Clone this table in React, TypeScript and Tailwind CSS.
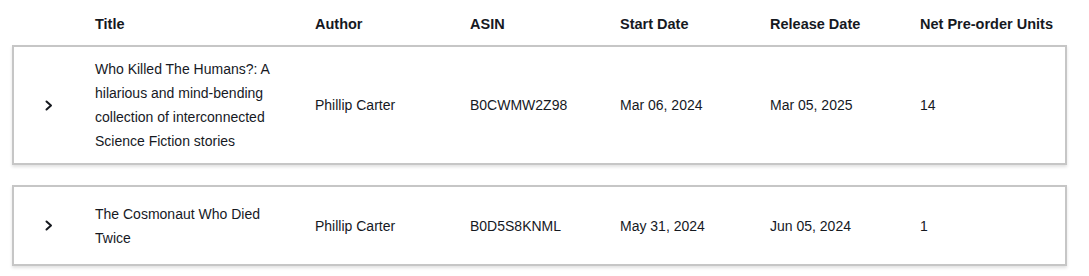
import React from "react";

interface Row {
  title: string;
  author: string;
  asin: string;
  startDate: string;
  releaseDate: string;
  units: number;
}

const rows: Row[] = [
  {
    title:
      "Who Killed The Humans?: A hilarious and mind-bending collection of interconnected Science Fiction stories",
    author: "Phillip Carter",
    asin: "B0CWMW2Z98",
    startDate: "Mar 06, 2024",
    releaseDate: "Mar 05, 2025",
    units: 14,
  },
  {
    title: "The Cosmonaut Who Died Twice",
    author: "Phillip Carter",
    asin: "B0D5S8KNML",
    startDate: "May 31, 2024",
    releaseDate: "Jun 05, 2024",
    units: 1,
  },
];

const cols = "grid grid-cols-[81px_220px_155px_150px_150px_150px_1fr]";

const Chevron = () => (
  <svg width="8" height="11" viewBox="0 0 8 11" fill="none">
    <path
      d="M1.5 1.5L6 5.5L1.5 9.5"
      stroke="#16191f"
      strokeWidth="2"
      strokeLinecap="round"
      strokeLinejoin="round"
    />
  </svg>
);

export default function App() {
  return (
    <div className="w-[1089px] h-[276px] bg-white pl-[12px] pr-[22px] text-[14px] text-[#16191f] font-['Liberation_Sans',_Arial,_sans-serif]">
      <div className={`${cols} h-[45px] px-[2px] pt-[14px] font-bold leading-5 text-[14.5px]`}>
        <div />
        <div>Title</div>
        <div>Author</div>
        <div>ASIN</div>
        <div>Start Date</div>
        <div>Release Date</div>
        <div>Net Pre-order Units</div>
      </div>

      <div className="flex flex-col gap-[20px]">
        {rows.map((row) => (
          <div
            key={row.asin}
            className={`${cols} items-center min-h-[81px] py-[10px] border-2 border-[#c6c6c6] bg-white shadow-[0_2px_3px_rgba(0,0,0,0.12)] leading-6`}
          >
            <div className="flex pl-[31px]">
              <Chevron />
            </div>
            <div className="w-[186px]">{row.title}</div>
            <div>{row.author}</div>
            <div>{row.asin}</div>
            <div>{row.startDate}</div>
            <div>{row.releaseDate}</div>
            <div>{row.units}</div>
          </div>
        ))}
      </div>
    </div>
  );
}
